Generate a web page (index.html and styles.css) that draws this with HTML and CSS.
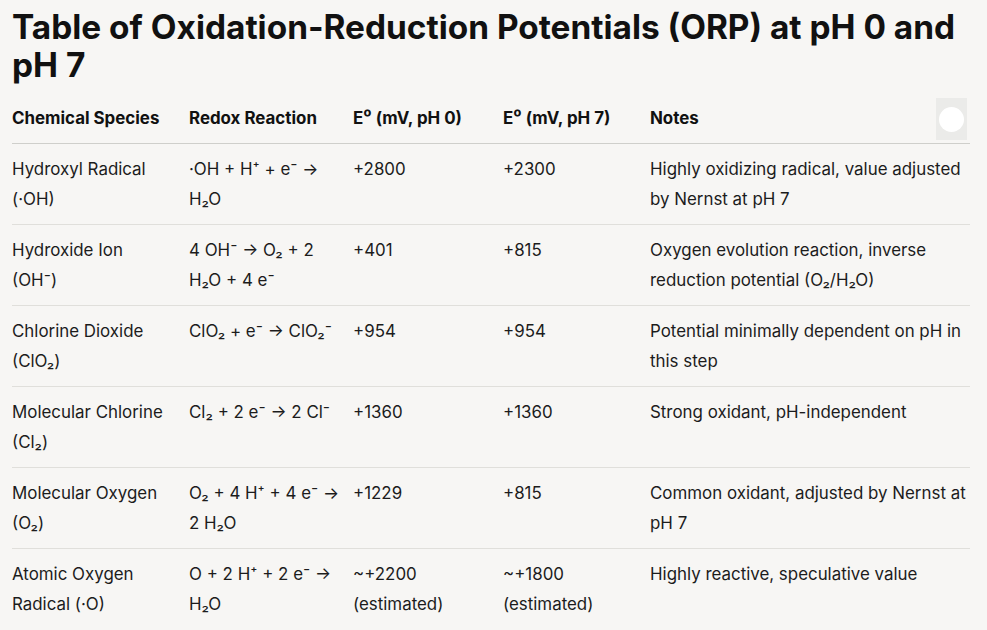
FILE: index.html
```html
<!DOCTYPE html>
<html lang="en">
<head>
<meta charset="utf-8">
<title>ORP Table</title>
<link rel="stylesheet" href="styles.css">
</head>
<body>
<main class="page">
  <h1 class="title">Table of Oxidation-Reduction Potentials (ORP) at pH 0 and pH 7</h1>
  <div class="table-wrap">
    <table class="orp">
      <colgroup>
        <col class="c1"><col class="c2"><col class="c3"><col class="c4"><col class="c5">
      </colgroup>
      <thead>
        <tr>
          <th>Chemical Species</th>
          <th>Redox Reaction</th>
          <th>E⁰ (mV, pH 0)</th>
          <th>E⁰ (mV, pH 7)</th>
          <th>Notes</th>
        </tr>
      </thead>
      <tbody>
        <tr>
          <td>Hydroxyl Radical (·OH)</td>
          <td>·OH + H⁺ + e⁻ → H₂O</td>
          <td>+2800</td>
          <td>+2300</td>
          <td>Highly oxidizing radical, value adjusted by Nernst at pH 7</td>
        </tr>
        <tr>
          <td>Hydroxide Ion (OH⁻)</td>
          <td>4 OH⁻ → O₂ + 2 H₂O + 4 e⁻</td>
          <td>+401</td>
          <td>+815</td>
          <td>Oxygen evolution reaction, inverse reduction potential (O₂/H₂O)</td>
        </tr>
        <tr>
          <td>Chlorine Dioxide (ClO₂)</td>
          <td>ClO₂ + e⁻ → ClO₂⁻</td>
          <td>+954</td>
          <td>+954</td>
          <td>Potential minimally dependent on pH in this step</td>
        </tr>
        <tr>
          <td>Molecular Chlorine (Cl₂)</td>
          <td>Cl₂ + 2 e⁻ → 2 Cl⁻</td>
          <td>+1360</td>
          <td>+1360</td>
          <td>Strong oxidant, pH-independent</td>
        </tr>
        <tr>
          <td>Molecular Oxygen (O₂)</td>
          <td>O₂ + 4 H⁺ + 4 e⁻ → 2 H₂O</td>
          <td>+1229</td>
          <td>+815</td>
          <td>Common oxidant, adjusted by Nernst at pH 7</td>
        </tr>
        <tr>
          <td>Atomic Oxygen Radical (·O)</td>
          <td>O + 2 H⁺ + 2 e⁻ → H₂O</td>
          <td>~+2200 (estimated)</td>
          <td>~+1800 (estimated)</td>
          <td>Highly reactive, speculative value</td>
        </tr>
      </tbody>
    </table>
    <div class="toggle"><span class="knob"></span></div>
  </div>
</main>
</body>
</html>
```

FILE: styles.css
```css
html, body {
  margin: 0;
  padding: 0;
  background: #f7f6f4;
}
body {
  font-family: Inter, "Noto Sans", sans-serif;
  color: #1c1c1c;
}
.page {
  padding: 8px 17px 0 12px;
}
.title {
  margin: 0 0 8px 0;
  font-size: 33.4px;
  line-height: 38px;
  font-weight: 700;
  color: #111;
  letter-spacing: 0;
}
.table-wrap {
  position: relative;
}
.orp {
  width: 958px;
  border-collapse: collapse;
  table-layout: fixed;
  font-size: 16.9px;
  line-height: 30px;
}
.c1 { width: 177px; }
.c2 { width: 164px; }
.c3 { width: 150px; }
.c4 { width: 147px; }
.c5 { width: 320px; }
.orp th {
  text-align: left;
  font-weight: 700;
  padding: 11px 12px 10px 0;
  border-bottom: 1px solid #cfcfcb;
  color: #111;
}
.orp td {
  vertical-align: top;
  padding: 10px 12px 10px 0;
  border-bottom: 1px solid #e0dfdb;
}
.orp td:first-child, .orp th:first-child {
  padding-right: 20px;
}
.orp td:last-child, .orp th:last-child {
  padding-right: 0;
}
.orp tbody tr:last-child td {
  border-bottom: none;
}
.toggle {
  position: absolute;
  top: 6px;
  right: 3px;
  width: 31px;
  height: 42px;
  background: #ebebe9;
  display: flex;
  align-items: center;
  justify-content: center;
}
.knob {
  width: 25px;
  height: 25px;
  border-radius: 50%;
  background: #fff;
}
```
